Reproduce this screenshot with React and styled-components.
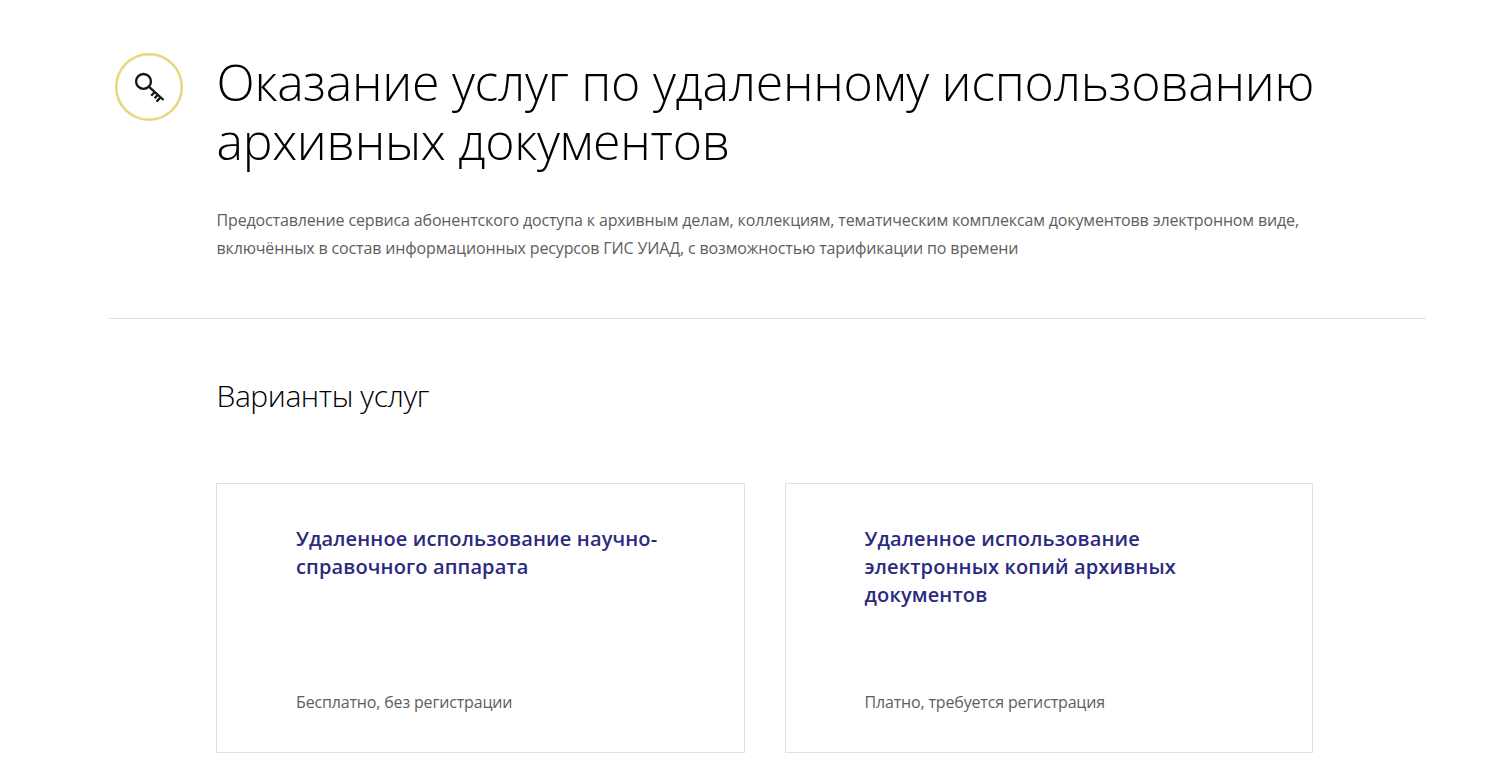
import React from 'react';
import styled, { createGlobalStyle } from 'styled-components';

const Global = createGlobalStyle`
  * { box-sizing: border-box; }
  body { margin: 0; background: #fff; font-family: 'Open Sans', 'Noto Sans', sans-serif; color: #000; }
  h1, h2, h3, p { margin: 0; }
`;

const Page = styled.main`
  width: 1511px;
  height: 782px;
  overflow: hidden;
`;

const Hero = styled.header`
  display: flex;
  align-items: flex-start;
  height: 319px;
  width: 1317px;
  margin-left: 109px;
  padding: 53px 0 0 6px;
  border-bottom: 1px solid #e0e0e0;
`;

const IconRing = styled.div`
  display: flex;
  align-items: center;
  justify-content: center;
  flex: none;
  width: 68px;
  height: 68px;
  border: 2px solid #e6d577;
  border-radius: 50%;
  box-shadow: inset 0 0 0 0.5px #e6d577;
`;

const HeroText = styled.div`
  margin-left: 33.5px;
  width: 1110px;
`;

const Title = styled.h1`
  font-size: 50px;
  line-height: 59px;
  font-weight: 300;
  letter-spacing: -0.26px;
  white-space: nowrap;
`;

const Lead = styled.p`
  margin-top: 35px;
  font-size: 16px;
  line-height: 28px;
  letter-spacing: -0.145px;
  color: #5e5e5e;
  white-space: nowrap;
`;

const Section = styled.section`
  padding: 57px 0 0 216px;
`;

const SectionTitle = styled.h2`
  padding-left: 0.5px;
  font-size: 30px;
  line-height: 40px;
  font-weight: 300;
  letter-spacing: -0.42px;
`;

const Cards = styled.div`
  display: grid;
  grid-template-columns: 528.5px 528.5px;
  gap: 40px;
  margin-top: 67px;
`;

const Card = styled.article`
  display: flex;
  flex-direction: column;
  justify-content: space-between;
  height: 270px;
  padding: 41px 78px 36px 79px;
  border: 1px solid #e0e0e0;
`;

const CardTitle = styled.h3`
  font-size: 20px;
  line-height: 28px;
  font-weight: 600;
  letter-spacing: 0.14px;
  white-space: nowrap;
  color: #2c2a80;
`;

const CardNote = styled.p`
  font-size: 16px;
  line-height: 28px;
  letter-spacing: -0.16px;
  color: #5e5e5e;
`;

const KeyIcon = () => (
  <svg width="32" height="32" viewBox="0 0 32 32" fill="none" stroke="#151515" strokeWidth="2.3">
    <circle cx="10.5" cy="10.4" r="7.4" />
    <path d="M15.8 15.6L30.6 29M21.8 21L18.2 24.8M24.8 23.7L21.6 27.2M27.6 26.3L23.6 30.6" />
  </svg>
);

const services = [
  { title: ['Удаленное использование научно-', 'справочного аппарата'], note: 'Бесплатно, без регистрации' },
  { title: ['Удаленное использование', 'электронных копий архивных', 'документов'], note: 'Платно, требуется регистрация' },
];

const Lines = ({ items }) => items.map((t, i) => (
  <React.Fragment key={t}>{i > 0 && <br />}{t}</React.Fragment>
));

export default function App() {
  return (
    <Page>
      <Global />
      <Hero>
        <IconRing><KeyIcon /></IconRing>
        <HeroText>
          <Title><Lines items={['Оказание услуг по удаленному использованию', 'архивных документов']} /></Title>
          <Lead>
            <Lines items={[
              'Предоставление сервиса абонентского доступа к архивным делам, коллекциям, тематическим комплексам документовв электронном виде,',
              'включённых в состав информационных ресурсов ГИС УИАД, с возможностью тарификации по времени',
            ]} />
          </Lead>
        </HeroText>
      </Hero>
      <Section>
        <SectionTitle>Варианты услуг</SectionTitle>
        <Cards>
          {services.map((s) => (
            <Card key={s.note}>
              <CardTitle><Lines items={s.title} /></CardTitle>
              <CardNote>{s.note}</CardNote>
            </Card>
          ))}
        </Cards>
      </Section>
    </Page>
  );
}
